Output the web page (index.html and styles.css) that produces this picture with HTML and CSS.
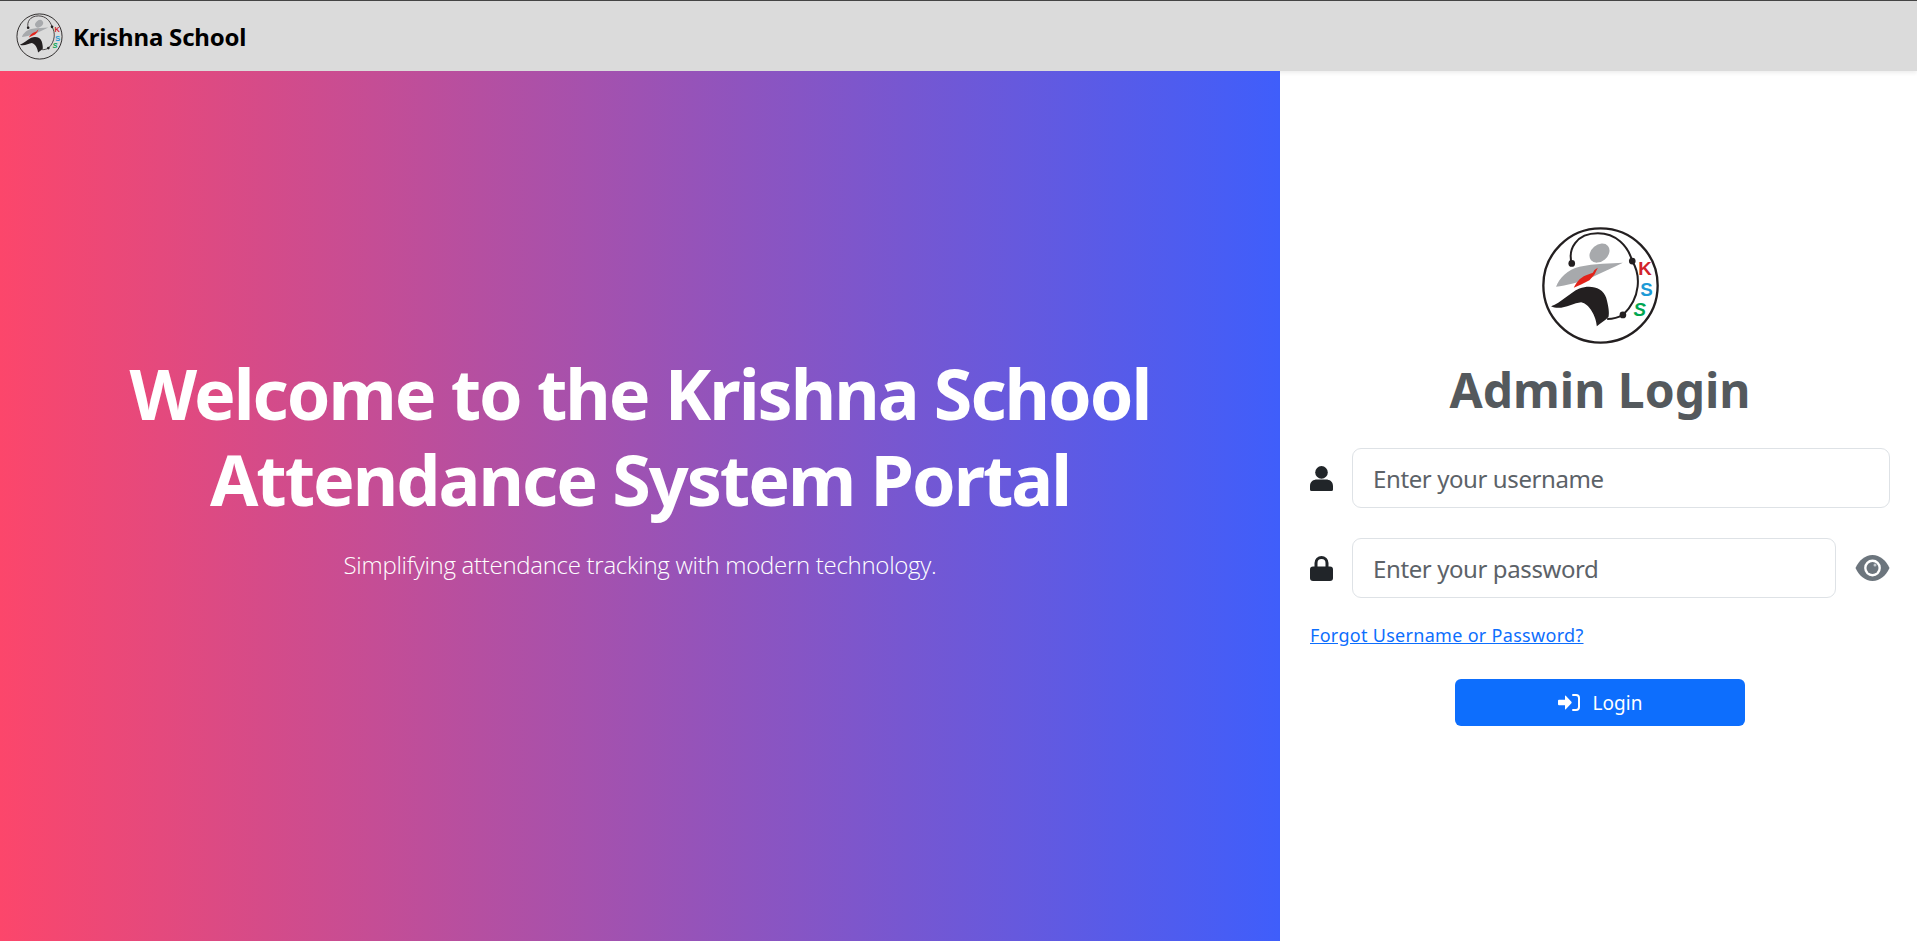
FILE: index.html
```html
<!DOCTYPE html>
<html lang="en">
<head>
    <meta charset="UTF-8">
    <title>Krishna School</title>
    <link rel="stylesheet" href="styles.css">
</head>
<body>
<svg class="defs" width="0" height="0">
    <defs>
        <symbol id="logo" viewBox="120 50 356 356">
            <circle cx="298" cy="228" r="171" fill="none" stroke="#231f20" stroke-width="7"/>
            <path d="M212 162 C200 120 225 72 290 72 C345 72 380 110 393 155 C418 195 420 265 365 316 C350 325 335 328 318 328" fill="none" stroke="#231f20" stroke-width="6"/>
            <circle cx="212" cy="162" r="10" fill="#231f20"/>
            <circle cx="393" cy="155" r="10" fill="#231f20"/>
            <circle cx="365" cy="316" r="10" fill="#231f20"/>
            <ellipse cx="295" cy="131" rx="33" ry="25" fill="#a7a9ac" transform="rotate(-40 295 131)"/>
            <path d="M165 232 C175 205 200 180 235 172 C280 162 330 162 365 160 C335 175 300 190 270 205 C235 218 195 228 165 232Z" fill="#a7a9ac"/>
            <path d="M218 235 C225 220 235 205 255 197 L275 190 L280 182 L290 175 L280 195 L265 212 L240 225Z" fill="#e2231a"/>
            <path d="M150 290 C180 280 205 250 235 237 C270 225 305 235 315 265 C322 290 325 310 322 322 C312 332 298 340 287 350 C285 320 265 283 240 278 C215 280 180 305 150 290Z" fill="#231f20"/>
            <text x="411" y="197" class="logo-k">K</text>
            <text x="417" y="259" class="logo-s1">S</text>
            <text x="397" y="318" class="logo-s2">S</text>
        </symbol>
    </defs>
</svg>

<nav class="navbar">
    <svg class="navbar-logo"><use href="#logo"/></svg>
    <span class="navbar-brand">Krishna School</span>
</nav>

<main class="page">
    <section class="hero">
        <h1>Welcome to the Krishna School Attendance System Portal</h1>
        <p>Simplifying attendance tracking with modern technology.</p>
    </section>

    <section class="login">
        <svg class="login-logo"><use href="#logo"/></svg>
        <h2>Admin Login</h2>
        <form class="login-form">
            <div class="field">
                <svg class="field-icon" viewBox="0 0 23 25">
                    <circle cx="11.5" cy="6.4" r="6.3"/>
                    <path d="M0 23.5 V20 C0 15.5 3.5 13.5 7 13.5 H16 C19.5 13.5 23 15.5 23 20 V23.5 A1.5 1.5 0 0 1 21.5 25 H1.5 A1.5 1.5 0 0 1 0 23.5Z"/>
                </svg>
                <input class="input" type="text" placeholder="Enter your username">
            </div>
            <div class="field">
                <svg class="field-icon" viewBox="0 0 23 25">
                    <rect x="0" y="10.5" width="23" height="14.5" rx="3"/>
                    <path d="M6 12 V7 a5.5 5.5 0 0 1 11 0 V12" fill="none" stroke="#212529" stroke-width="3"/>
                </svg>
                <input class="input" type="password" placeholder="Enter your password">
                <svg class="eye-icon" viewBox="0 0 35 26">
                    <path d="M0.5 13 C4 5.5 10 0 17.5 0 S31 5.5 34.5 13 C31 20.5 25 26 17.5 26 S4 20.5 0.5 13Z"/>
                    <circle cx="17.5" cy="13" r="8.4" fill="#fff"/>
                    <circle cx="17.5" cy="13" r="6"/>
                    <circle cx="20" cy="10" r="1.5" fill="#c5cacf"/>
                </svg>
            </div>
            <a class="forgot" href="#">Forgot Username or Password?</a>
            <button class="btn-login" type="button">
                <svg class="btn-icon" viewBox="0 0 22 17">
                    <path d="M1 5.7 H7 V2 Q7 1.2 7.8 1.8 L13.4 7.7 Q14 8.5 13.4 9.3 L7.8 15.2 Q7 15.8 7 15 V11.3 H1 Q0 11.3 0 10.3 V6.7 Q0 5.7 1 5.7Z"/>
                    <path d="M15 1 H18 A3 3 0 0 1 21 4 V13 A3 3 0 0 1 18 16 H15" fill="none" stroke="#fff" stroke-width="2" stroke-linecap="round"/>
                </svg>
                Login
            </button>
        </form>
    </section>
</main>
</body>
</html>
```
FILE: styles.css
```css
*{
    box-sizing: border-box;
}
html,body{
    height: 100%;
}
body{
    margin: 0;
    display: flex;
    flex-direction: column;
    overflow: hidden;
    font-family: "Noto Sans", "Open Sans", sans-serif;
    color: #212529;
    background: #fff;
}
.defs{
    position: absolute;
}
.logo-k,.logo-s1,.logo-s2{
    font-family: "Liberation Sans", sans-serif;
    font-weight: bold;
    font-size: 56px;
}
.logo-k{
    fill: #d2232a;
}
.logo-s1{
    fill: #1c9ad6;
}
.logo-s2{
    fill: #00a651;
    font-style: italic;
}

.navbar{
    height: 71px;
    flex: none;
    display: flex;
    align-items: center;
    gap: 10px;
    padding: 0 0 0 16px;
    background: #dbdbdb;
    border-top: 1px solid #444;
    box-shadow: 0 2px 4px rgba(0,0,0,.075);
}
.navbar-logo{
    width: 47px;
    height: 47px;
}
.navbar-brand{
    font-size: 24px;
    font-weight: 700;
    letter-spacing: -.2px;
    color: #000;
}

.page{
    flex: 1;
    display: flex;
    min-height: 0;
}
.hero{
    position: relative;
    width: 1280px;
    display: flex;
    flex-direction: column;
    justify-content: center;
    align-items: center;
    text-align: center;
    color: #fff;
    background: linear-gradient(to right, #fc466b, #3f5efb);
    padding-bottom: 80px;
}
.hero h1{
    max-width: 1100px;
    margin: 0 0 26px;
    font-size: 70px;
    line-height: 86px;
    font-weight: 700;
    letter-spacing: -2px;
}
.hero p{
    margin: 0;
    font-family: "Open Sans", "Noto Sans", sans-serif;
    font-size: 24px;
    font-weight: 300;
    line-height: 34px;
    letter-spacing: -.28px;
}

.login{
    flex: 1;
    display: flex;
    flex-direction: column;
    align-items: center;
    justify-content: center;
    padding: 0 27px 60px 30px;
}
.login-logo{
    width: 119px;
    height: 119px;
}
.login h2{
    margin: 11px 0 24px;
    font-size: 48px;
    line-height: 68px;
    font-weight: 700;
    color: #54595d;
}
.login-form{
    width: 100%;
    display: flex;
    flex-direction: column;
}
.field{
    display: flex;
    align-items: center;
    margin-bottom: 30px;
}
.field-icon{
    width: 23px;
    height: 25px;
    margin-right: 19px;
    fill: #212529;
    flex: none;
}
.input{
    flex: 1;
    min-width: 0;
    height: 60px;
    padding: 0 20px;
    border: 1px solid #dee2e6;
    border-radius: 9px;
    font-family: inherit;
    font-size: 24px;
    letter-spacing: -.4px;
    color: #212529;
}
.input::placeholder{
    color: #5c6268;
}
.eye-icon{
    width: 35px;
    height: 26px;
    margin-left: 19px;
    fill: #6c757d;
    flex: none;
}
.forgot{
    font-size: 18px;
    letter-spacing: .3px;
    color: #0d6efd;
    margin: -5px 0 32px;
}
.btn-login{
    align-self: center;
    width: 290px;
    height: 47px;
    display: flex;
    align-items: center;
    justify-content: center;
    gap: 13px;
    border: none;
    border-radius: 6px;
    background: #0d6efd;
    color: #fff;
    font-family: inherit;
    font-size: 19px;
}
.btn-icon{
    width: 22px;
    height: 17px;
    fill: #fff;
}
```
